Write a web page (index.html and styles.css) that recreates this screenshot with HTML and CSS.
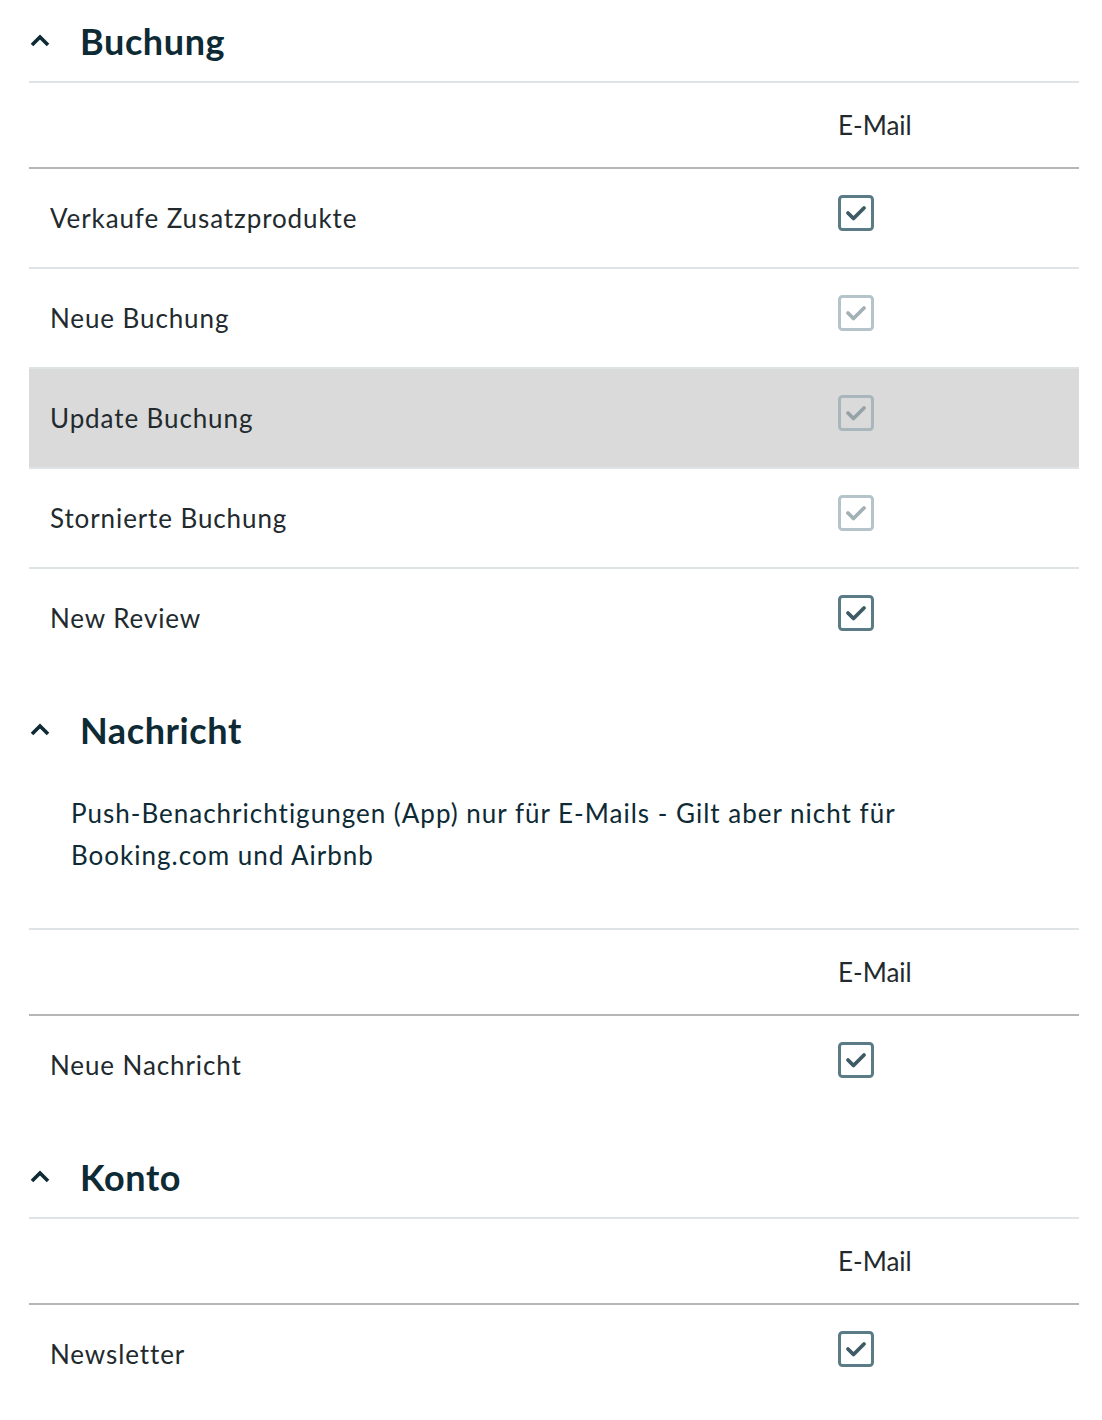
FILE: index.html
```html
<!DOCTYPE html>
<html lang="de">
<head>
    <meta charset="UTF-8">
    <title>Benachrichtigungen</title>
    <link rel="stylesheet" href="styles.css">
</head>
<body>
    <div class="settings">

        <section class="group">
            <div class="group-head">
                <svg class="chevron" width="20" height="14" viewBox="0 0 20 14"><path d="M2 11 L10 3 L18 11" fill="none" stroke="#0d2a35" stroke-width="3.6"/></svg>
                <h2>Buchung</h2>
            </div>
            <table class="prefs with-top">
                <thead>
                    <tr><th></th><th>E-Mail</th></tr>
                </thead>
                <tbody>
                    <tr>
                        <td>Verkaufe Zusatzprodukte</td>
                        <td><span class="box on"><svg width="36" height="36" viewBox="0 0 36 36"><rect x="1.5" y="1.5" width="33" height="33" rx="3" fill="#fff" stroke="#5b7b86" stroke-width="3"/><path d="M10 18 L15.5 23.5 L26 13" fill="none" stroke="#3d5a65" stroke-width="3.8" stroke-linecap="round" stroke-linejoin="round"/></svg></span></td>
                    </tr>
                    <tr>
                        <td>Neue Buchung</td>
                        <td><span class="box off"><svg width="36" height="36" viewBox="0 0 36 36"><rect x="1.5" y="1.5" width="33" height="33" rx="3" fill="none" stroke="#b5c4ca" stroke-width="3"/><path d="M10 18 L15.5 23.5 L26 13" fill="none" stroke="#a3b1b7" stroke-width="3.8" stroke-linecap="round" stroke-linejoin="round"/></svg></span></td>
                    </tr>
                    <tr class="hover">
                        <td>Update Buchung</td>
                        <td><span class="box off"><svg width="36" height="36" viewBox="0 0 36 36"><rect x="1.5" y="1.5" width="33" height="33" rx="3" fill="none" stroke="#a9b6bc" stroke-width="3"/><path d="M10 18 L15.5 23.5 L26 13" fill="none" stroke="#95a3a9" stroke-width="3.8" stroke-linecap="round" stroke-linejoin="round"/></svg></span></td>
                    </tr>
                    <tr>
                        <td>Stornierte Buchung</td>
                        <td><span class="box off"><svg width="36" height="36" viewBox="0 0 36 36"><rect x="1.5" y="1.5" width="33" height="33" rx="3" fill="none" stroke="#b5c4ca" stroke-width="3"/><path d="M10 18 L15.5 23.5 L26 13" fill="none" stroke="#a3b1b7" stroke-width="3.8" stroke-linecap="round" stroke-linejoin="round"/></svg></span></td>
                    </tr>
                    <tr>
                        <td>New Review</td>
                        <td><span class="box on"><svg width="36" height="36" viewBox="0 0 36 36"><rect x="1.5" y="1.5" width="33" height="33" rx="3" fill="#fff" stroke="#5b7b86" stroke-width="3"/><path d="M10 18 L15.5 23.5 L26 13" fill="none" stroke="#3d5a65" stroke-width="3.8" stroke-linecap="round" stroke-linejoin="round"/></svg></span></td>
                    </tr>
                </tbody>
            </table>
        </section>

        <section class="group">
            <div class="group-head">
                <svg class="chevron" width="20" height="14" viewBox="0 0 20 14"><path d="M2 11 L10 3 L18 11" fill="none" stroke="#0d2a35" stroke-width="3.6"/></svg>
                <h2>Nachricht</h2>
            </div>
            <p class="note">Push-Benachrichtigungen (App) nur für E-Mails - Gilt aber nicht für Booking.com und Airbnb</p>
            <table class="prefs with-top">
                <thead>
                    <tr><th></th><th>E-Mail</th></tr>
                </thead>
                <tbody>
                    <tr>
                        <td>Neue Nachricht</td>
                        <td><span class="box on"><svg width="36" height="36" viewBox="0 0 36 36"><rect x="1.5" y="1.5" width="33" height="33" rx="3" fill="#fff" stroke="#5b7b86" stroke-width="3"/><path d="M10 18 L15.5 23.5 L26 13" fill="none" stroke="#3d5a65" stroke-width="3.8" stroke-linecap="round" stroke-linejoin="round"/></svg></span></td>
                    </tr>
                </tbody>
            </table>
        </section>

        <section class="group">
            <div class="group-head">
                <svg class="chevron" width="20" height="14" viewBox="0 0 20 14"><path d="M2 11 L10 3 L18 11" fill="none" stroke="#0d2a35" stroke-width="3.6"/></svg>
                <h2>Konto</h2>
            </div>
            <table class="prefs with-top">
                <thead>
                    <tr><th></th><th>E-Mail</th></tr>
                </thead>
                <tbody>
                    <tr>
                        <td>Newsletter</td>
                        <td><span class="box on"><svg width="36" height="36" viewBox="0 0 36 36"><rect x="1.5" y="1.5" width="33" height="33" rx="3" fill="#fff" stroke="#5b7b86" stroke-width="3"/><path d="M10 18 L15.5 23.5 L26 13" fill="none" stroke="#3d5a65" stroke-width="3.8" stroke-linecap="round" stroke-linejoin="round"/></svg></span></td>
                    </tr>
                </tbody>
            </table>
        </section>

    </div>
</body>
</html>
```

FILE: styles.css
```css
body {
    margin: 0;
    background: #fff;
    font-family: Lato, "Open Sans", Arial, sans-serif;
    font-variant-ligatures: none;
    color: #222a2e;
}
.settings {
    padding: 0 23px 0 29px;
}
.group + .group {
    margin-top: 22px;
}
.group-head {
    display: flex;
    align-items: center;
    height: 81px;
}
.chevron {
    margin: 0 30px 0 1px;
}
.group-head h2 {
    margin: 0;
    font-size: 36px;
    font-weight: 700;
    letter-spacing: 0.6px;
    color: #0d2a35;
}
.note {
    margin: 0 0 52px;
    padding: 22px 140px 0 42px;
    font-size: 26px;
    line-height: 42px;
    letter-spacing: 1px;
    color: #0d2a35;
}
.prefs {
    width: 100%;
    border-collapse: collapse;
}
.prefs.with-top thead tr {
    border-top: 2px solid #dee3e6;
}
.prefs th {
    height: 84px;
    padding: 0;
    text-align: left;
    font-size: 26px;
    font-weight: 400;
    color: #222a2e;
    border-bottom: 2px solid #b6b6b6;
}
.prefs td {
    height: 98px;
    padding: 0 0 0 21px;
    font-size: 26px;
    letter-spacing: 0.9px;
    vertical-align: middle;
}
.prefs td:last-child,
.prefs th:last-child {
    width: 241px;
    padding: 0;
}
.prefs tbody tr {
    border-bottom: 2px solid #dee3e6;
}
.prefs tbody tr:last-child {
    border-bottom: none;
}
.prefs tr.hover {
    background: #dadada;
}
.box {
    display: inline-block;
    margin-top: -4px;
}
.box svg {
    display: block;
}
```
